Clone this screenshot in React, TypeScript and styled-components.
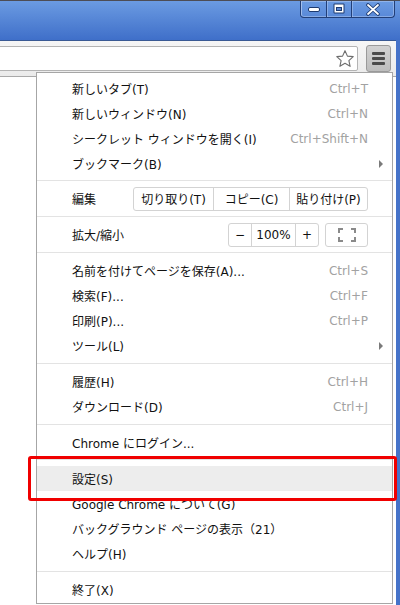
import React from "react";
import styled, { createGlobalStyle } from "styled-components";

const GlobalStyle = createGlobalStyle`
  html, body { margin: 0; padding: 0; background: #fff; }
  body { font-family: "DejaVu Sans", "Noto Sans CJK JP", sans-serif; }
  * { box-sizing: border-box; }
`;

const Frame = styled.div`
  position: relative;
  width: 400px;
  height: 605px;
  overflow: hidden;
  background: #4673c9;
  display: flex;
  flex-direction: column;
`;

const TitleBar = styled.div`
  height: 40px;
  flex: none;
  background: linear-gradient(#6b9be2, #3f6fc9);
  border-top: 1px solid #4d4d55;
  display: flex;
  justify-content: flex-end;
  align-items: flex-start;
  padding-right: 5px;
`;

const Controls = styled.div`
  display: flex;
  height: 17px;
  border: 1px solid #223f78;
  border-top: none;
  border-radius: 0 0 4px 4px;
  box-shadow: inset 0 0 0 1px rgba(190, 210, 245, 0.45);
  overflow: hidden;
`;

const CtrlBtn = styled.div<{ $w: number; $last?: boolean }>`
  width: ${(p) => p.$w}px;
  height: 100%;
  display: flex;
  align-items: center;
  justify-content: center;
  border-right: ${(p) => (p.$last ? "none" : "1px solid #223f78")};
  box-shadow: inset 1px 0 0 rgba(190, 210, 245, 0.45);
`;

const Client = styled.div`
  flex: 1;
  margin-right: 4px;
  background: #fff;
  display: flex;
  flex-direction: column;
`;

const Toolbar = styled.div`
  height: 37px;
  flex: none;
  background: linear-gradient(#f6f6f6, #ebebeb);
  border-top: 1px solid #3a5a94;
  border-bottom: 1px solid #a9a9a9;
  display: flex;
  align-items: flex-start;
  padding: 4px 5px 0 0;
  gap: 8px;
`;

const Omnibox = styled.div`
  flex: 1;
  height: 25px;
  margin-top: 1px;
  margin-left: -10px;
  background: #fff;
  border: 1px solid #b4b4b4;
  border-radius: 2px;
  display: flex;
  align-items: center;
  justify-content: flex-end;
  padding-right: 2px;
`;

const MenuButton = styled.div`
  width: 25px;
  height: 27px;
  border: 1px solid #9a9a9a;
  border-radius: 3px;
  background: linear-gradient(#d2d2d2, #bdbdbd);
  display: flex;
  flex-direction: column;
  align-items: center;
  justify-content: center;
  gap: 2px;
`;

const Bar = styled.div`
  width: 13px;
  height: 3px;
  border-radius: 1px;
  background: #4a4a4a;
`;

const Menu = styled.div`
  position: absolute;
  left: 36px;
  top: 72px;
  width: 357px;
  background: #fff;
  border: 1px solid #a6a6a6;
  font-size: 12px;
  color: #111;
`;

const Section = styled.div<{ $pt?: number; $pb?: number }>`
  padding-top: ${(p) => p.$pt ?? 5}px;
  padding-bottom: ${(p) => p.$pb ?? 5}px;
  & + & {
    border-top: 1px solid #e3e3e3;
  }
`;

const Row = styled.div<{ $active?: boolean }>`
  height: 25px;
  display: flex;
  align-items: center;
  justify-content: space-between;
  padding: 0 24px 0 35px;
  background: ${(p) => (p.$active ? "#ededed" : "transparent")};
  white-space: nowrap;
`;

const WideRow = styled(Row)`
  height: 35px;
`;

const Shortcut = styled.span`
  color: #a2a2a2;
`;

const Arrow = styled.span`
  width: 0;
  height: 0;
  border-top: 4px solid transparent;
  border-bottom: 4px solid transparent;
  border-left: 4px solid #7a7a7a;
  margin-right: -15px;
`;

const Group = styled.div`
  display: flex;
  height: 24px;
  border: 1px solid #d3d3d3;
  border-radius: 3px;
`;

const GroupBtn = styled.div<{ $w: number }>`
  width: ${(p) => p.$w}px;
  display: flex;
  align-items: center;
  justify-content: center;
  & + & {
    border-left: 1px solid #d3d3d3;
  }
`;

const Controls2 = styled.div`
  display: flex;
  gap: 6px;
`;

const Highlight = styled.div`
  position: absolute;
  left: 28px;
  top: 456px;
  width: 369px;
  height: 45px;
  border: 3px solid #f00000;
  border-radius: 3px;
  pointer-events: none;
`;

const Star = () => (
  <svg width="20" height="20" viewBox="0 0 18 18">
    <path
      d="M9 1.5 L11.2 6.4 L16.4 6.9 L12.5 10.4 L13.6 15.6 L9 12.9 L4.4 15.6 L5.5 10.4 L1.6 6.9 L6.8 6.4 Z"
      fill="#fff"
      stroke="#6e6e6e"
      strokeWidth="1"
      strokeLinejoin="round"
    />
  </svg>
);

const MinIcon = () => (
  <svg width="14" height="8" viewBox="0 0 14 8">
    <rect x="1.5" y="2.5" width="11" height="4" rx="1.5" fill="#fff" stroke="#1d3a70" strokeWidth="1" />
  </svg>
);

const MaxIcon = () => (
  <svg width="14" height="12" viewBox="0 0 14 12">
    <rect x="1.5" y="0.5" width="11" height="10" rx="1" fill="#1d3a70" />
    <rect x="2.5" y="1.5" width="9" height="8" fill="#fff" />
    <rect x="4.5" y="4.5" width="5" height="3" fill="#5b86d0" stroke="#1d3a70" strokeWidth="1" />
  </svg>
);

const CloseIcon = () => (
  <svg width="16" height="13" viewBox="0 0 16 13">
    <path d="M3 2 L13 11 M13 2 L3 11" stroke="#1d3a70" strokeWidth="3.6" strokeLinecap="round" />
    <path d="M3 2 L13 11 M13 2 L3 11" stroke="#fff" strokeWidth="1.8" strokeLinecap="round" />
  </svg>
);

const FullIcon = () => (
  <svg width="18" height="14" viewBox="0 0 18 14">
    <path
      d="M1 5 V1 H5 M13 1 H17 V5 M17 9 V13 H13 M5 13 H1 V9"
      fill="none"
      stroke="#8a8a8a"
      strokeWidth="2"
    />
  </svg>
);

type Item = { label: string; shortcut?: string; sub?: boolean; active?: boolean };

const MenuRow = ({ label, shortcut, sub, active }: Item) => (
  <Row $active={active}>
    <span>{label}</span>
    {shortcut && <Shortcut>{shortcut}</Shortcut>}
    {sub && <Arrow />}
  </Row>
);

const sec1: Item[] = [
  { label: "新しいタブ(T)", shortcut: "Ctrl+T" },
  { label: "新しいウィンドウ(N)", shortcut: "Ctrl+N" },
  { label: "シークレット ウィンドウを開く(I)", shortcut: "Ctrl+Shift+N" },
  { label: "ブックマーク(B)", sub: true },
];
const sec3: Item[] = [
  { label: "名前を付けてページを保存(A)...", shortcut: "Ctrl+S" },
  { label: "検索(F)...", shortcut: "Ctrl+F" },
  { label: "印刷(P)...", shortcut: "Ctrl+P" },
  { label: "ツール(L)", sub: true },
];
const sec4: Item[] = [
  { label: "履歴(H)", shortcut: "Ctrl+H" },
  { label: "ダウンロード(D)", shortcut: "Ctrl+J" },
];
const sec6: Item[] = [
  { label: "設定(S)", active: true },
  { label: "Google Chrome について(G)" },
  { label: "バックグラウンド ページの表示（21）" },
  { label: "ヘルプ(H)" },
];

export default function App() {
  return (
    <>
      <GlobalStyle />
      <Frame>
        <TitleBar>
          <Controls>
            <CtrlBtn $w={26}>
              <MinIcon />
            </CtrlBtn>
            <CtrlBtn $w={25}>
              <MaxIcon />
            </CtrlBtn>
            <CtrlBtn $w={42} $last>
              <CloseIcon />
            </CtrlBtn>
          </Controls>
        </TitleBar>
        <Client>
          <Toolbar>
            <Omnibox>
              <Star />
            </Omnibox>
            <MenuButton>
              <Bar />
              <Bar />
              <Bar />
            </MenuButton>
          </Toolbar>
        </Client>
        <Menu>
          <Section $pt={3} $pb={4}>
            {sec1.map((it) => (
              <MenuRow key={it.label} {...it} />
            ))}
          </Section>
          <Section $pt={0} $pb={0}>
            <WideRow>
              <span>編集</span>
              <Group>
                <GroupBtn $w={79}>切り取り(T)</GroupBtn>
                <GroupBtn $w={76}>コピー(C)</GroupBtn>
                <GroupBtn $w={78}>貼り付け(P)</GroupBtn>
              </Group>
            </WideRow>
          </Section>
          <Section $pt={0} $pb={0}>
            <WideRow>
              <span>拡大/縮小</span>
              <Controls2>
                <Group>
                  <GroupBtn $w={22}>−</GroupBtn>
                  <GroupBtn $w={44}>100%</GroupBtn>
                  <GroupBtn $w={23}>+</GroupBtn>
                </Group>
                <Group>
                  <GroupBtn $w={41}>
                    <FullIcon />
                  </GroupBtn>
                </Group>
              </Controls2>
            </WideRow>
          </Section>
          <Section>
            {sec3.map((it) => (
              <MenuRow key={it.label} {...it} />
            ))}
          </Section>
          <Section>
            {sec4.map((it) => (
              <MenuRow key={it.label} {...it} />
            ))}
          </Section>
          <Section $pb={4}>
            <MenuRow label="Chrome にログイン..." />
          </Section>
          <Section $pt={6}>
            {sec6.map((it) => (
              <MenuRow key={it.label} {...it} />
            ))}
          </Section>
          <Section $pb={1}>
            <MenuRow label="終了(X)" />
          </Section>
        </Menu>
        <Highlight />
      </Frame>
    </>
  );
}
